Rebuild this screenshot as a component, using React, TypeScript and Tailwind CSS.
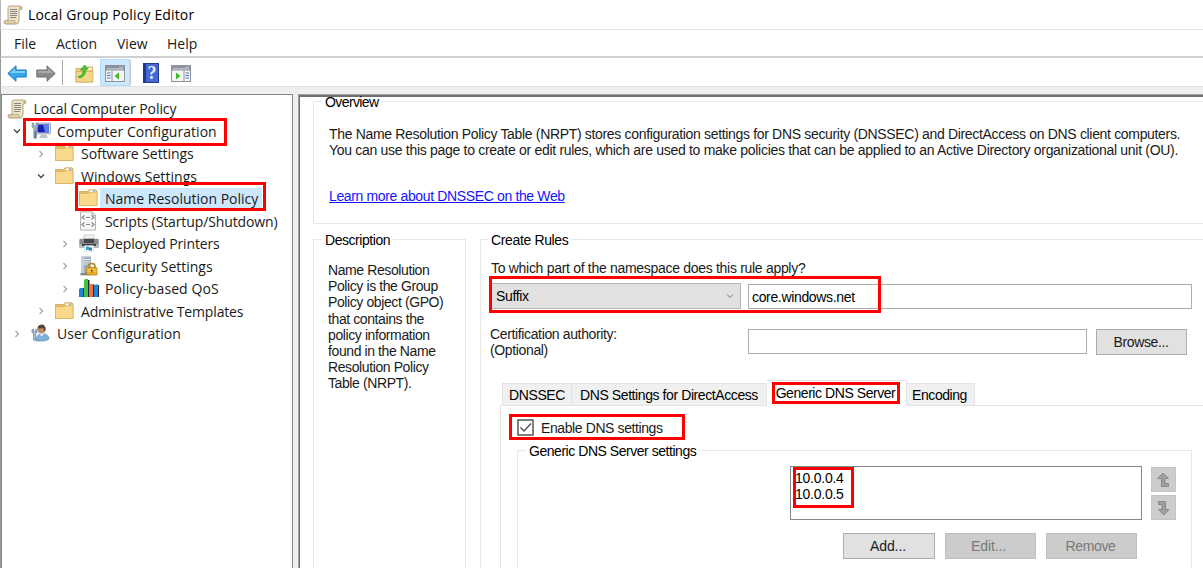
import type { ReactNode } from "react";

type IconProps = { className?: string };

function ScrollIcon({ className = "" }: IconProps) {
  return (
    <svg viewBox="0 0 20 20" className={`size-5 shrink-0 ${className}`}>
      <path d="M5 2.5 Q5 1 7 1 H17 Q19 1 19 3 Q19 5 17 5 H16 V15 Q16 19 13 19 H3 Q1 19 1 17 Q1 15.500 3 15.500 H5 Z" fill="#efe4c4" stroke="#a1936f" strokeWidth=".8" />
      <path d="M16 5 V2.500 Q17 1 18.500 2 Q19.500 4 17.500 5 Z" fill="#c9b98e" />
      <path d="M3 15.500 H12 Q11.500 18.800 13.500 18.800 H3 Q1 18.500 1.200 17 Q1.500 15.500 3 15.500Z" fill="#dfd0a8" stroke="#a2946f" strokeWidth=".5" />
      <path d="M7 4.500h7M7 6.500h7M7 8.500h7M7 10.500h7M7 12.500h6" stroke="#85878c" strokeWidth="1" />
    </svg>
  );
}

function FolderIcon() {
  return (
    <svg viewBox="0 0 20 18" className="h-[18px] w-5 shrink-0">
      <path d="M.5 2.500 H8.500 L10 .8 H17 L18 2 V16.500 H.5 Z" fill="#e6bd62" stroke="#c99f48" strokeWidth=".7" />
      <rect x="10.500" y="1.500" width="6.500" height="2.200" fill="#fff" />
      <rect x="14" y="1.500" width="2.500" height="1.300" fill="#5aa5de" />
      <path d="M.5 4.500 H9.500 L11 3.600 H18 V16.500 H.5 Z" fill="#f9d98c" stroke="#d6b05c" strokeWidth=".7" />
    </svg>
  );
}

function ComputerIcon() {
  return (
    <svg viewBox="0 0 20 18" className="h-[18px] w-5 shrink-0">
      <rect x="5" y="1" width="14.500" height="11" fill="#d5d8de" stroke="#9fa4ad" strokeWidth=".8" />
      <rect x="6.500" y="2.500" width="11.500" height="8" fill="#1620b8" />
      <path d="M12 2.500 H18 V10.500 H14 Z" fill="#5b7ef0" />
      <path d="M10 12.500h5l2 3.500H8z" fill="#bfc3c9" />
      <path d="M1.200 1 L1 5 L2.800 6.500 V16 Q4.200 17.500 5.500 16 V6.500 L7 5 V1.500 L5.500 1 V4 H2.800 V1 Z" fill="#aab9c9" stroke="#66798e" strokeWidth=".6" />
      <path d="M3.500 9h1.500v7H3.500z" fill="#4c7ba8" />
    </svg>
  );
}

function ScriptIcon() {
  return (
    <svg viewBox="0 0 20 20" className="size-5 shrink-0">
      <path d="M1.500 .8 H13 L16.500 4 V19 H1.500 Z" fill="#f7f7f7" stroke="#aaa" strokeWidth=".9" />
      <path d="M13 1v3.200h3.500" fill="none" stroke="#aaa" strokeWidth=".8" />
      <path d="M5.500 4.500 L3 6.500 L5.500 8.500 M12.500 4.500 L15 6.500 L12.500 8.500 M7 6.500h4M5.500 11.500 L3 13.500 L5.500 15.500 M12.500 11.500 L15 13.500 L12.500 15.500 M7 13.500h4" fill="none" stroke="#858585" strokeWidth="1.200" />
    </svg>
  );
}

function PrinterIcon() {
  return (
    <svg viewBox="0 0 20 18" className="h-[18px] w-5 shrink-0">
      <path d="M5 1h10v6H5z" fill="#f2f2f2" stroke="#b5b5b5" strokeWidth=".6" />
      <path d="M.3 6 Q.3 4.800 2 4.800 H18 Q19.700 4.800 19.700 6 V13 H.3z" fill="#888b8f" />
      <path d="M5 4.800h10v4.200H5z" fill="#45484c" />
      <path d="M.3 10.500h19.400V14H.3z" fill="#b9bcbf" />
      <path d="M3 10h14v2H3z" fill="#3c3e41" />
      <path d="M5.500 11.500h9V17.500h-9z" fill="#fbfbfb" stroke="#c4d2dc" strokeWidth=".5" />
      <path d="M7 12.500h3v3.500H7z" fill="#35a5c8" />
      <path d="M10 13.500h3v3h-3z" fill="#3b74c8" />
    </svg>
  );
}

function SecurityIcon() {
  return (
    <svg viewBox="0 0 20 20" className="size-5 shrink-0">
      <path d="M2.500 .5h9.500v17H2.500z" fill="#9eacba" />
      <path d="M2.500 .5h2.500v17H2.500z" fill="#c3ccd5" />
      <path d="M4.500 3.500h7M4.500 5.800h7M4.500 8h7" stroke="#f2f5f8" strokeWidth=".9" />
      <path d="M1.500 17h9v2.300H1.500z" fill="#7c8792" />
      <path d="M9.500 12 V10 Q9.500 7.500 12.700 7.500 Q16 7.500 16 10 V12" fill="none" stroke="#b18a2c" strokeWidth="1.700" />
      <rect x="7.500" y="11.500" width="10.500" height="7.500" rx=".8" fill="#e7ae29" stroke="#aa7b10" strokeWidth=".7" />
      <path d="M8 13.500h9.500M8 15.500h9.500" stroke="#f8d36a" strokeWidth=".7" />
      <path d="M12 13.500h1.500v3H12z" fill="#7b5a10" />
    </svg>
  );
}

function QosIcon() {
  return (
    <svg viewBox="0 0 21 20" className="h-5 w-[21px] shrink-0">
      <path d="M3.500 10h2v9h-2zM8.500 2h2v17H8.500zM13 6.500h2.500v12.500h-2.500zM18 7h2v12h-2z" fill="#1a2a3c" />
      <path d="M0 11 L1.500 10 H4 V19 H0z" fill="#1b86d8" />
      <path d="M5 2 L6.500 1 H9 V19 H5z" fill="#45c244" />
      <path d="M10 7 L11.500 6 H14 V19 H10z" fill="#ee7340" />
      <path d="M15 7.500 L16.500 6.500 H19 V19 H15z" fill="#1b86d8" />
    </svg>
  );
}

function UserIcon() {
  return (
    <svg viewBox="0 0 20 18" className="h-[18px] w-5 shrink-0">
      <path d="M5 17 Q5 10 11 9.500 Q18 10 18 15 Q16 17.500 5 17z" fill="#7fb0dc" stroke="#5788b5" strokeWidth=".6" />
      <path d="M9 9.500 L10.500 12.500 L13 9.500z" fill="#fff" />
      <circle cx="10.500" cy="5.200" r="4" fill="#c08a5c" />
      <path d="M6.500 4.500 Q7 .5 11 .5 Q15 1 14.500 6 L13 7.500 L12.300 4 Q9 4.500 6.500 4.500z" fill="#54453b" />
      <path d="M1 5.500 V8.500 L2.500 10 V16 Q3.500 17.500 4.700 16 V10 L6 8.500 V5.500 L4.700 5.200 V7.500 H2.500 V5.200z" fill="#a9bccf" stroke="#56708c" strokeWidth=".6" />
    </svg>
  );
}

function BackIcon() {
  return (
    <svg viewBox="0 0 20 17" className="h-[17px] w-5 shrink-0">
      <path d="M.8 8.500 L9 .8 V5 H19.200 V12 H9 V16.200 Z" fill="#35a8ea" stroke="#1c79b8" strokeWidth="1" strokeLinejoin="round" />
      <path d="M3 8 L8 3.300 V6 H18 V8z" fill="#7fcdf6" />
    </svg>
  );
}

function ForwardIcon() {
  return (
    <svg viewBox="0 0 20 17" className="h-[17px] w-5 shrink-0">
      <path d="M19.200 8.500 L11 .8 V5 H.8 V12 H11 V16.200 Z" fill="#8b8b8b" stroke="#707070" strokeWidth="1" strokeLinejoin="round" />
      <path d="M17 8 L12 3.300 V6 H2 V8z" fill="#aaa" />
    </svg>
  );
}

function UpFolderIcon() {
  return (
    <svg viewBox="0 0 19 19" className="size-[19px] shrink-0">
      <path d="M1 4.500 H9 L10.500 3 H17.500 V18 H1z" fill="#efcf7c" stroke="#cda650" strokeWidth=".8" />
      <path d="M12 4h5v1.500h-5z" fill="#fff" />
      <path d="M1 7.500 H18 V18 H1z" fill="#f5d688" stroke="#cda650" strokeWidth=".7" />
      <path d="M3 12.500 Q8 12 8.300 6 H5.500 L9.500 1 L13.200 5 H11 Q11 12.500 4.500 14z" fill="#49c832" stroke="#2f9a20" strokeWidth=".7" />
    </svg>
  );
}

function PaneIcon({ flipped = false }: { flipped?: boolean }) {
  return (
    <svg viewBox="0 0 20 17" className="h-[17px] w-5 shrink-0">
      <rect x=".5" y=".5" width="19" height="16" fill="#f5f5f5" stroke="#8d929c" />
      <path d="M1 1h18v4.500H1z" fill="#8b919d" />
      <path d="M2 3.900h16" stroke="#dfe2e7" strokeWidth=".9" />
      <path d="M14.500 2.200h1M16.700 2.200h1" stroke="#fff" strokeWidth="1" />
      {flipped ? (
        <g>
          <path d="M13 5.500v11" stroke="#8d929c" />
          <path d="M14.500 8h3.500M14.500 10.500h3.500M14.500 13h3.500" stroke="#4178bd" strokeWidth="1.200" />
          <path d="M5 7.500v7l4.500-3.500z" fill="#3fb829" />
        </g>
      ) : (
        <g>
          <path d="M7 5.500v11" stroke="#8d929c" />
          <path d="M2 8h3.500M2 10.500h3.500M2 13h3.500" stroke="#4178bd" strokeWidth="1.200" />
          <path d="M14 7.500v7L9.500 11z" fill="#3fb829" />
        </g>
      )}
    </svg>
  );
}

function HelpIcon() {
  return (
    <div className="flex h-5 w-4 items-center justify-center border border-[#203a8c] border-l-[3px] bg-[#4668d2] font-['Liberation_Serif',serif] text-[18px] leading-none font-bold text-[#e6ebfa]">
      ?
    </div>
  );
}

function Chevron({ state }: { state?: "open" | "closed" }) {
  return (
    <svg viewBox="0 0 10 10" className="size-2.5 shrink-0">
      {state === "open" && <path d="M2 3.500 L5 6.500 L8 3.500" fill="none" stroke="#444" strokeWidth="1.300" />}
      {state === "closed" && <path d="M3.500 2 L6.500 5 L3.500 8" fill="none" stroke="#a3a3a3" strokeWidth="1.200" />}
    </svg>
  );
}

type Row = {
  label: string;
  indent: string;
  icon: ReactNode;
  state?: "open" | "closed";
  tracking: string;
  selected?: boolean;
};

const rows: Row[] = [
  { label: "Computer Configuration", indent: "pl-[10px]", icon: <ComputerIcon />, state: "open", tracking: "tracking-[0.04px]" },
  { label: "Software Settings", indent: "pl-[34px]", icon: <FolderIcon />, state: "closed", tracking: "tracking-[-0.05px]" },
  { label: "Windows Settings", indent: "pl-[34px]", icon: <FolderIcon />, state: "open", tracking: "tracking-[0.06px]" },
  { label: "Name Resolution Policy", indent: "pl-[58px]", icon: <FolderIcon />, tracking: "tracking-[0px]", selected: true },
  { label: "Scripts (Startup/Shutdown)", indent: "pl-[58px]", icon: <ScriptIcon />, tracking: "tracking-[-0.11px]" },
  { label: "Deployed Printers", indent: "pl-[58px]", icon: <PrinterIcon />, state: "closed", tracking: "tracking-[-0.15px]" },
  { label: "Security Settings", indent: "pl-[58px]", icon: <SecurityIcon />, state: "closed", tracking: "tracking-[0px]" },
  { label: "Policy-based QoS", indent: "pl-[58px]", icon: <QosIcon />, state: "closed", tracking: "tracking-[0.1px]" },
  { label: "Administrative Templates", indent: "pl-[34px]", icon: <FolderIcon />, state: "closed", tracking: "tracking-[-0.16px]" },
  { label: "User Configuration", indent: "pl-[10px]", icon: <UserIcon />, state: "closed", tracking: "tracking-[0.03px]" },
];

function TreeRow({ row }: { row: Row }) {
  return (
    <div className={`flex h-[22.5px] items-center ${row.indent}`}>
      <Chevron state={row.state} />
      <div className="ml-[8.5px] flex w-[22.5px] items-center pb-px">{row.icon}</div>
      <div className={`-ml-px flex h-[22px] items-center pr-1 pl-[5px] ${row.selected ? "bg-[#cce8ff]" : ""}`}>
        <span className={`whitespace-nowrap ${row.tracking}`}>{row.label}</span>
      </div>
    </div>
  );
}

function Legend({ children, className }: { children: ReactNode; className: string }) {
  return <span className={`-mt-[5px] block w-fit bg-white px-[3px] leading-[10px] whitespace-nowrap text-black ${className}`}>{children}</span>;
}

function Button({ children, disabled, className = "" }: { children: ReactNode; disabled?: boolean; className?: string }) {
  return (
    <button
      className={`flex h-[26px] items-center justify-center border ${disabled ? "border-[#bfbfbf] bg-[#cccccc] text-[#787878]" : "border-[#adadad] bg-[#e1e1e1]"} ${className}`}
    >
      {children}
    </button>
  );
}

function Highlight({ className }: { className: string }) {
  return <div className={`pointer-events-none absolute border-3 border-[#fe0000] ${className}`} />;
}

export default function App() {
  return (
    <div className="relative flex h-[568px] w-[1203px] flex-col overflow-hidden bg-white font-['Open_Sans','Noto_Sans',sans-serif] text-[14px] text-[#1a1a1a]">
      <header className="flex h-[30px] shrink-0 items-center border-b border-l border-[#e2e2e2] border-l-[#b5b5b5] pl-[2px] text-black">
        <ScrollIcon />
        <span className="ml-[5px] tracking-[0.14px] whitespace-nowrap">Local Group Policy Editor</span>
      </header>

      <nav className="flex h-[28px] shrink-0 items-center border-b-2 border-l border-[#cfcfcf] border-l-[#999] pl-[13px] whitespace-nowrap">
        <span className="w-[42px]">File</span>
        <span className="w-[61px]">Action</span>
        <span className="w-[50px]">View</span>
        <span>Help</span>
      </nav>

      <div className="flex h-[29px] shrink-0 items-center border-b border-l border-[#e0e0e0] border-l-[#999] pl-[6px]">
        <div className="flex pt-0.5">
          <BackIcon />
        </div>
        <div className="ml-[9px] flex pt-0.5">
          <ForwardIcon />
        </div>
        <div className="ml-[6px] h-[25px] w-px bg-[#a8a8a8]" />
        <div className="ml-[12px] flex pt-0.5">
          <UpFolderIcon />
        </div>
        <div className="ml-[6px] flex h-[27px] w-[30px] items-center justify-center border border-[#b5dcfa] bg-[#cce8ff] pt-[3px]">
          <PaneIcon />
        </div>
        <div className="h-[25px] w-px bg-[#c8c8c8]" />
        <div className="ml-[12px] flex pt-0.5">
          <HelpIcon />
        </div>
        <div className="ml-[12px] flex pt-[3px]">
          <PaneIcon flipped />
        </div>
      </div>

      <div className="flex min-h-0 flex-1 border-l border-l-[#999] bg-[#efefef] pt-[7px]">
        <aside className="w-[292px] shrink-0 border border-b-0 border-[#828790] bg-white pt-[2.5px]">
          <div className="flex h-[22.5px] items-center pl-[5px]">
            <ScrollIcon />
            <span className="ml-[6.5px] tracking-[-0.08px] whitespace-nowrap">Local Computer Policy</span>
          </div>
          {rows.map((row) => (
            <TreeRow key={row.label} row={row} />
          ))}
        </aside>

        <main className="ml-[5px] flex min-w-0 flex-1 border-t border-l border-[#a0a0a0]">
          <div className="flex min-w-0 flex-1 flex-col border-t-2 border-l border-[#707070] bg-white pl-[13px] font-['Liberation_Sans',Arial,sans-serif] text-[14px] leading-4 tracking-[-0.36px]">
            <section className="mt-[4px] h-[123px] shrink-0 border border-r-0 border-[#e8e8e8] pl-[8px]">
              <Legend className="tracking-[-0.6px]">Overview</Legend>
              <div className="mt-[19px] pl-[7px]">
                <p className="tracking-[-0.328px] whitespace-nowrap">
                  The Name Resolution Policy Table (NRPT) stores configuration settings for DNS security (DNSSEC) and DirectAccess on DNS client computers.
                </p>
                <p className="tracking-[-0.298px] whitespace-nowrap">
                  You can use this page to create or edit rules, which are used to make policies that can be applied to an Active Directory organizational unit (OU).
                </p>
                <a className="mt-[30px] block w-fit whitespace-nowrap text-[#1414ff] underline">Learn more about DNSSEC on the Web</a>
              </div>
            </section>

            <div className="mt-[15px] flex min-h-0 flex-1">
              <section className="w-[153px] shrink-0 border border-b-0 border-[#e8e8e8] pl-[8px]">
                <Legend className="tracking-[-0.45px]">Description</Legend>
                <p className="mt-[17px] pl-[6px] leading-[16.2px] tracking-[-0.4px] whitespace-nowrap">
                  Name Resolution
                  <br />
                  Policy is the Group
                  <br />
                  Policy object (GPO)
                  <br />
                  that contains the
                  <br />
                  policy information
                  <br />
                  found in the Name
                  <br />
                  Resolution Policy
                  <br />
                  Table (NRPT).
                </p>
              </section>

              <section className="ml-[14px] flex min-w-0 flex-1 flex-col border-t border-l border-[#e8e8e8]">
                <Legend className="ml-[7px]">Create Rules</Legend>
                <label className="mt-[15px] ml-[10px] tracking-[-0.3px] whitespace-nowrap">To which part of the namespace does this rule apply?</label>
                <div className="mt-[7px] ml-[9px] flex">
                  <div className="flex h-[26px] w-[251px] items-center justify-between border border-[#b5b5b5] bg-[#e1e1e1] pr-[5px] pl-[5px] text-black">
                    Suffix
                    <svg viewBox="0 0 10 10" className="size-2.5">
                      <path d="M2 3.500 L5 6.500 L8 3.500" fill="none" stroke="#777" />
                    </svg>
                  </div>
                  <div className="mt-px ml-[7px] flex h-[25px] w-[444px] items-center border border-[#adadad] pl-[3px] tracking-[-0.34px] text-black">
                    core.windows.net
                  </div>
                </div>
                <div className="mt-[17px] ml-[9px] flex">
                  <div className="w-[258px] whitespace-nowrap">
                    Certification authority:
                    <br />
                    (Optional)
                  </div>
                  <div className="mt-[3px] h-[25px] w-[339px] border border-[#adadad]" />
                  <Button className="mt-[3px] ml-[9px] w-[91px] pr-px">Browse...</Button>
                </div>

                <div className="mt-[22px] ml-[19px] flex h-[26px] items-end text-black">
                  <div className="w-[2px] self-end border-b border-[#e3e3e3]" />
                  <div className="flex h-[23px] w-[70px] items-center justify-center border border-[#e3e3e3] bg-[#f0f0f0]">DNSSEC</div>
                  <div className="flex h-[23px] w-[195px] items-center justify-center border border-l-0 border-[#e3e3e3] bg-[#f0f0f0] tracking-[-0.41px] whitespace-nowrap">
                    DNS Settings for DirectAccess
                  </div>
                  <div className="flex h-[26px] w-[140px] items-center justify-center border-t border-r border-[#e3e3e3] pr-[2px] pb-[2px] tracking-[-0.44px] whitespace-nowrap">
                    Generic DNS Server
                  </div>
                  <div className="flex h-[23px] w-[68px] items-center justify-center border border-l-0 border-[#e3e3e3] bg-[#f0f0f0] pr-[2px] tracking-[-0.45px]">
                    Encoding
                  </div>
                  <div className="flex-1 border-b border-[#e3e3e3]" />
                </div>
                <div className="ml-[19px] flex min-h-0 flex-1 flex-col border-l border-[#e3e3e3] pt-[13px] pl-[16px]">
                  <div className="flex h-[17px] shrink-0 items-center">
                    <svg viewBox="0 0 17 17" className="size-[17px]">
                      <rect x="1" y="1" width="15" height="15" fill="#fff" stroke="#4a4a4a" strokeWidth="1.400" />
                      <path d="M3.500 8.500 L7 12 L14 4.500" fill="none" stroke="#555" strokeWidth="1.500" />
                    </svg>
                    <span className="ml-[7px] tracking-[-0.4px] whitespace-nowrap">Enable DNS settings</span>
                  </div>
                  <section className="mt-[14px] w-[675px] flex-1 border border-b-0 border-[#e8e8e8]">
                    <Legend className="ml-[8px] tracking-[-0.46px]">Generic DNS Server settings</Legend>
                    <div className="mt-[10px] ml-[272px] flex">
                      <div className="h-[54px] w-[352px] border border-[#828790] pt-[3px] pl-[4px] tracking-[-0.25px] text-black">
                        <div>10.0.0.4</div>
                        <div>10.0.0.5</div>
                      </div>
                      <div className="mt-px ml-[9px] flex flex-col gap-[3px]">
                        <div className="flex size-[25px] items-center justify-center border border-[#c4c4c4] bg-[#cccccc]">
                          <svg viewBox="0 0 14 16" className="h-4 w-3.5">
                            <path d="M6 1 L11.500 6.500 H8 V11.500 H11.500 V14.500 H4.500 V6.500 H.8z" fill="#a0a0a0" stroke="#858585" strokeWidth=".9" />
                          </svg>
                        </div>
                        <div className="flex size-[25px] items-center justify-center border border-[#c4c4c4] bg-[#cccccc]">
                          <svg viewBox="0 0 14 16" className="h-4 w-3.5">
                            <path d="M1.500 1.500 H8.500 V9.500 H12 L6.800 15 L1.500 9.500 H5 V4.500 H1.500z" fill="#a0a0a0" stroke="#858585" strokeWidth=".9" />
                          </svg>
                        </div>
                      </div>
                    </div>
                    <div className="mt-[13px] ml-[325px] flex gap-[10px]">
                      <Button className="w-[92px] pr-0.5 tracking-[-0.1px]">Add...</Button>
                      <Button disabled className="w-[91px] pr-1 tracking-[-0.1px]">
                        Edit...
                      </Button>
                      <Button disabled className="w-[91px] pr-0.5">
                        Remove
                      </Button>
                    </div>
                  </section>
                </div>
              </section>
            </div>
          </div>
        </main>
      </div>

      <Highlight className="top-[118px] left-[23px] h-[28px] w-[204px]" />
      <Highlight className="top-[182px] left-[75px] h-[29px] w-[191px]" />
      <Highlight className="top-[276px] left-[489px] h-[37px] w-[392px]" />
      <Highlight className="top-[382px] left-[772px] h-[22px] w-[128px]" />
      <Highlight className="top-[414px] left-[509px] h-[26px] w-[176px]" />
      <Highlight className="top-[467px] left-[793px] h-[41px] w-[61px]" />
    </div>
  );
}
